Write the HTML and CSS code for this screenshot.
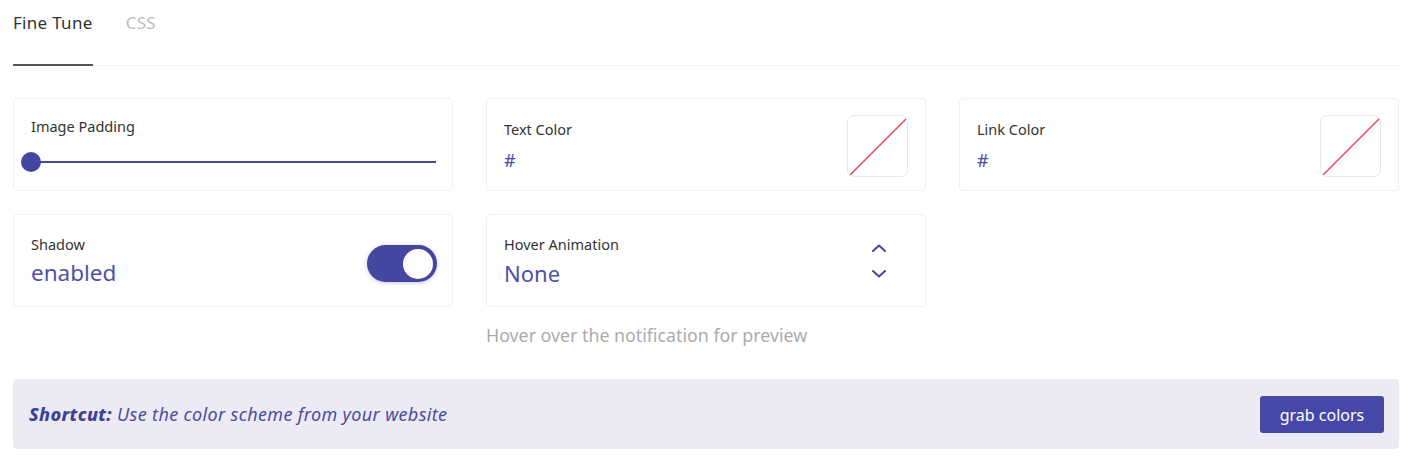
FILE: index.html
```html
<!DOCTYPE html>
<html lang="en">

<head>
    <meta charset="UTF-8">
    <meta name="viewport" content="width=device-width, initial-scale=1.0">
    <title>Fine Tune</title>
    <link rel="stylesheet" href="styles.css">
</head>

<body>
    <div class="page">
        <div class="tabs">
            <div class="tab active">Fine Tune</div>
            <div class="tab">CSS</div>
        </div>

        <div class="grid">
            <div class="card">
                <div class="card-body">
                    <div class="label">Image Padding</div>
                    <div class="slider">
                        <div class="thumb"></div>
                        <div class="track"></div>
                    </div>
                </div>
            </div>

            <div class="card color-card">
                <div class="card-body">
                    <div class="label">Text Color</div>
                    <div class="hash">#</div>
                </div>
                <div class="swatch">
                    <svg viewBox="0 0 60 60" width="60" height="60"><line x1="2" y1="59" x2="59" y2="2" stroke="#e8474f" stroke-width="1.5"/></svg>
                </div>
            </div>

            <div class="card color-card">
                <div class="card-body">
                    <div class="label">Link Color</div>
                    <div class="hash">#</div>
                </div>
                <div class="swatch">
                    <svg viewBox="0 0 60 60" width="60" height="60"><line x1="2" y1="59" x2="59" y2="2" stroke="#e8474f" stroke-width="1.5"/></svg>
                </div>
            </div>

            <div class="card toggle-card">
                <div class="card-body">
                    <div class="label">Shadow</div>
                    <div class="value">enabled</div>
                </div>
                <div class="toggle"><div class="knob"></div></div>
            </div>

            <div class="card select-card">
                <div class="card-body">
                    <div class="label">Hover Animation</div>
                    <div class="value">None</div>
                </div>
                <div class="arrows">
                    <svg viewBox="0 0 14 8" width="14" height="8"><path d="M1 7 L7 1.5 L13 7" fill="none" stroke="#4446a0" stroke-width="2" stroke-linecap="round" stroke-linejoin="round"/></svg>
                    <svg viewBox="0 0 14 8" width="14" height="8"><path d="M1 1 L7 6.5 L13 1" fill="none" stroke="#4446a0" stroke-width="2" stroke-linecap="round" stroke-linejoin="round"/></svg>
                </div>
            </div>

            <div class="empty"></div>
            <div class="empty"></div>
            <div class="hint">Hover over the notification for preview</div>
        </div>

        <div class="shortcut">
            <p><b>Shortcut:</b> Use the color scheme from your website</p>
            <button class="grab">grab colors</button>
        </div>
    </div>
</body>

</html>
```

FILE: styles.css
```css
* {
    margin: 0;
    padding: 0;
    box-sizing: border-box;
}

body {
    background: #fff;
    font-family: 'Noto Sans', 'Open Sans', sans-serif;
    color: #333;
}

.page {
    padding: 0 24px 0 13px;
}

/* Tabs */
.tabs {
    display: flex;
    gap: 33px;
    height: 66px;
    border-bottom: 1px solid #f0f0f0;
}

.tab {
    font-family: 'Noto Sans', sans-serif;
    font-size: 17px;
    letter-spacing: 0.3px;
    color: #bdbdbd;
    padding-top: 11px;
}

.tab.active {
    color: #333;
    border-bottom: 2px solid #555;
    margin-bottom: -1px;
}

/* Cards */
.grid {
    display: grid;
    grid-template-columns: repeat(3, 440px);
    grid-auto-rows: auto;
    column-gap: 33px;
    row-gap: 23px;
    margin-top: 32px;
}

.card {
    height: 93px;
    border: 1px solid #f0f0f2;
    border-radius: 4px;
    display: flex;
    align-items: center;
    justify-content: space-between;
    padding: 0 17px 0 17px;
}

.card-body {
    flex: 1;
}

.label {
    font-size: 14.5px;
    line-height: 20px;
    color: #333;
}

.hash {
    font-size: 18px;
    line-height: 24px;
    color: #4a4ca6;
    margin-top: 9px;
}

.color-card .label {
    margin-top: 1px;
}

/* Slider */
.slider {
    display: flex;
    align-items: center;
    margin-top: 16px;
    margin-left: -10px;
    margin-bottom: 2px;
}

.thumb {
    width: 20px;
    height: 20px;
    border-radius: 50%;
    background: #4446a0;
    margin-right: -10px;
}

.track {
    flex: 1;
    height: 2px;
    background: #4446a0;
    margin-right: -1px;
}

.swatch {
    width: 61px;
    height: 62px;
    border: 1px solid #e8e8ea;
    border-radius: 7px;
    overflow: hidden;
    margin-top: 3px;
}

.swatch svg {
    display: block;
}

/* Toggle */
.value {
    font-size: 22.5px;
    line-height: 30px;
    color: #4f52a8;
    margin-top: 4px;
}

.toggle {
    width: 70px;
    height: 37px;
    border-radius: 19px;
    background: #4446a0;
    display: flex;
    align-items: center;
    justify-content: flex-end;
    padding-right: 4px;
    margin-top: 6px;
    margin-right: -2px;
    box-shadow: 0 1px 4px rgba(68, 70, 160, 0.3);
}

.knob {
    width: 30px;
    height: 30px;
    border-radius: 50%;
    background: #fff;
}

.select-card {
    padding-right: 39px;
}

.select-card .value {
    font-size: 22px;
}

.arrows {
    display: flex;
    flex-direction: column;
    gap: 18px;
}

.arrows svg {
    display: block;
}

.hint {
    font-size: 17.8px;
    color: #ababab;
    margin-top: -7px;
}

/* Shortcut band */
.shortcut {
    margin-top: 32px;
    width: 1386px;
    height: 70px;
    background: #ecebf5;
    border-radius: 4px;
    display: flex;
    align-items: center;
    justify-content: space-between;
    padding: 0 15px 0 16px;
}

.shortcut p {
    font-family: 'Noto Sans', sans-serif;
    font-style: italic;
    font-size: 18px;
    letter-spacing: 0.35px;
    color: #4b4d9e;
}

.shortcut b {
    font-weight: 800;
    color: #3e4196;
}

.grab {
    background: #4548a6;
    color: #fff;
    border: none;
    border-radius: 3px;
    font-family: 'Noto Sans', sans-serif;
    font-size: 16px;
    width: 124px;
    height: 37px;
    margin-top: 1px;
}
```
